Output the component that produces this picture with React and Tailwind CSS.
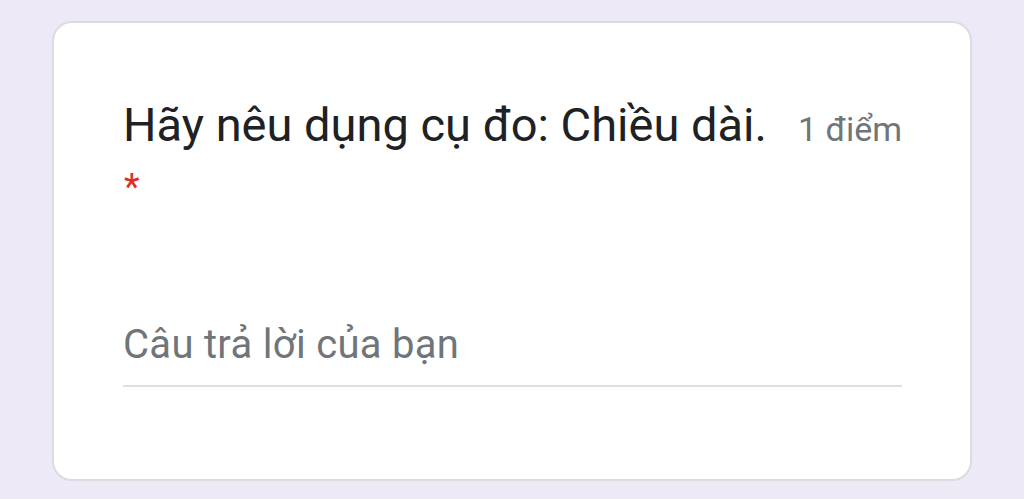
export default function App() {
  return (
    <div className="w-[1024px] h-[499px] bg-[#ede9f7] pt-[21px] pl-[52px] overflow-hidden">
      <div className="w-[920px] h-[460px] bg-white border-2 border-[#dadce0] rounded-[20px] pl-[69px] pr-[68px] pt-[74px]">
        <div className="flex items-baseline justify-between">
          <div className="text-[47px] leading-[56px] text-[#202124]" style={{ fontFamily: "Roboto, sans-serif" }}>
            Hãy nêu dụng cụ đo: Chiều dài.
          </div>
          <div className="text-[34px] text-[#70757a]" style={{ fontFamily: "Roboto, sans-serif" }}>
            1 điểm
          </div>
        </div>
        <div className="text-[36px] leading-[40px] text-[#d93025] mt-[12px] pl-[1px]" style={{ fontFamily: "Roboto, sans-serif" }}>*</div>
        <div className="mt-[114px] text-[40px] leading-[48px] tracking-[0.3px] text-[#70757a]" style={{ fontFamily: "Roboto, sans-serif" }}>
          Câu trả lời của bạn
        </div>
        <div className="mt-[16px] h-[2px] bg-[#e0e0e0]" />
      </div>
    </div>
  );
}
